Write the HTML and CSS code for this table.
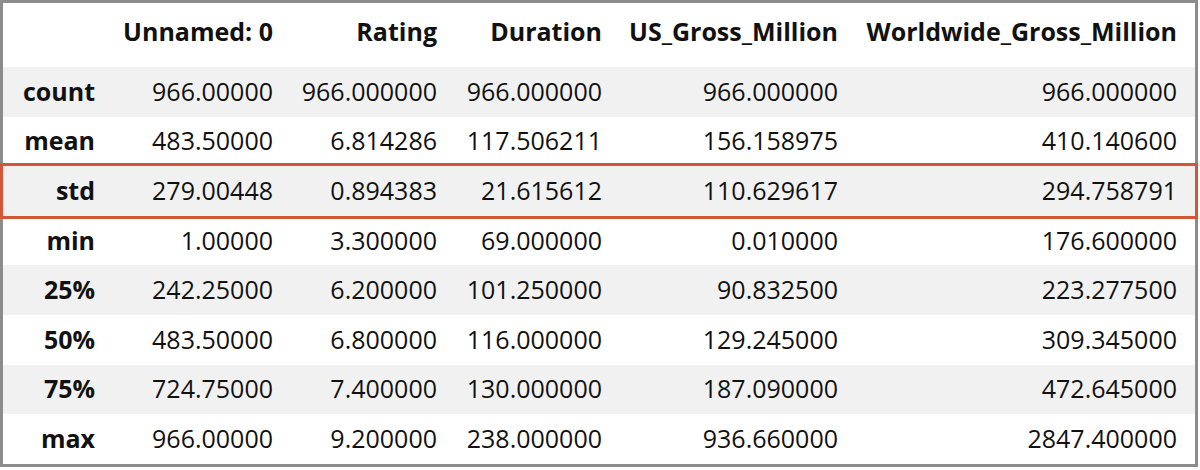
FILE: index.html
```html
<!DOCTYPE html>
<html>
<head>
<meta charset="utf-8">
<link rel="stylesheet" href="styles.css">
</head>
<body>
<div class="frame">
<table class="df">
<colgroup>
<col class="c-idx"><col class="c1"><col class="c2"><col class="c3"><col class="c4"><col class="c5">
</colgroup>
<thead>
<tr class="head"><th></th><th>Unnamed: 0</th><th>Rating</th><th>Duration</th><th>US_Gross_Million</th><th>Worldwide_Gross_Million</th></tr>
</thead>
<tbody>
<tr class="odd"><th>count</th><td>966.00000</td><td>966.000000</td><td>966.000000</td><td>966.000000</td><td>966.000000</td></tr>
<tr><th>mean</th><td>483.50000</td><td>6.814286</td><td>117.506211</td><td>156.158975</td><td>410.140600</td></tr>
<tr class="odd hl"><th>std</th><td>279.00448</td><td>0.894383</td><td>21.615612</td><td>110.629617</td><td>294.758791</td></tr>
<tr><th>min</th><td>1.00000</td><td>3.300000</td><td>69.000000</td><td>0.010000</td><td>176.600000</td></tr>
<tr class="odd"><th>25%</th><td>242.25000</td><td>6.200000</td><td>101.250000</td><td>90.832500</td><td>223.277500</td></tr>
<tr><th>50%</th><td>483.50000</td><td>6.800000</td><td>116.000000</td><td>129.245000</td><td>309.345000</td></tr>
<tr class="odd"><th>75%</th><td>724.75000</td><td>7.400000</td><td>130.000000</td><td>187.090000</td><td>472.645000</td></tr>
<tr><th>max</th><td>966.00000</td><td>9.200000</td><td>238.000000</td><td>936.660000</td><td>2847.400000</td></tr>
</tbody>
</table>
</div>
</body>
</html>
```
FILE: styles.css
```css
html, body {
  margin: 0;
  padding: 0;
  background: #ffffff;
}
.frame {
  box-sizing: border-box;
  width: 1198px;
  height: 467px;
  border: 3px solid #8c8c8c;
  background: #ffffff;
}
.df {
  border-collapse: separate;
  border-spacing: 0;
  table-layout: fixed;
  width: 1192px;
  font-family: "Open Sans", "Noto Sans", sans-serif;
  font-size: 25px;
  color: #111111;
}
.c-idx { width: 112px; }
.c1 { width: 178px; }
.c2 { width: 164px; }
.c3 { width: 165px; }
.c4 { width: 236px; }
.c5 { width: 337px; }
.df th, .df td {
  text-align: right;
  padding: 0 20px 2px 0;
  white-space: nowrap;
  vertical-align: middle;
}
.df th:last-child, .df td:last-child { padding-right: 18px; }
.df th { font-weight: 700; }
.df td { font-weight: 400; }
.head { height: 64px; }
.head th { padding-bottom: 8px; }
.df tbody tr { height: 49.6px; }
.odd { background: #f1f1f1; }
.hl {
  outline: 3px solid #d5553a;
  outline-offset: 0;
}
```
